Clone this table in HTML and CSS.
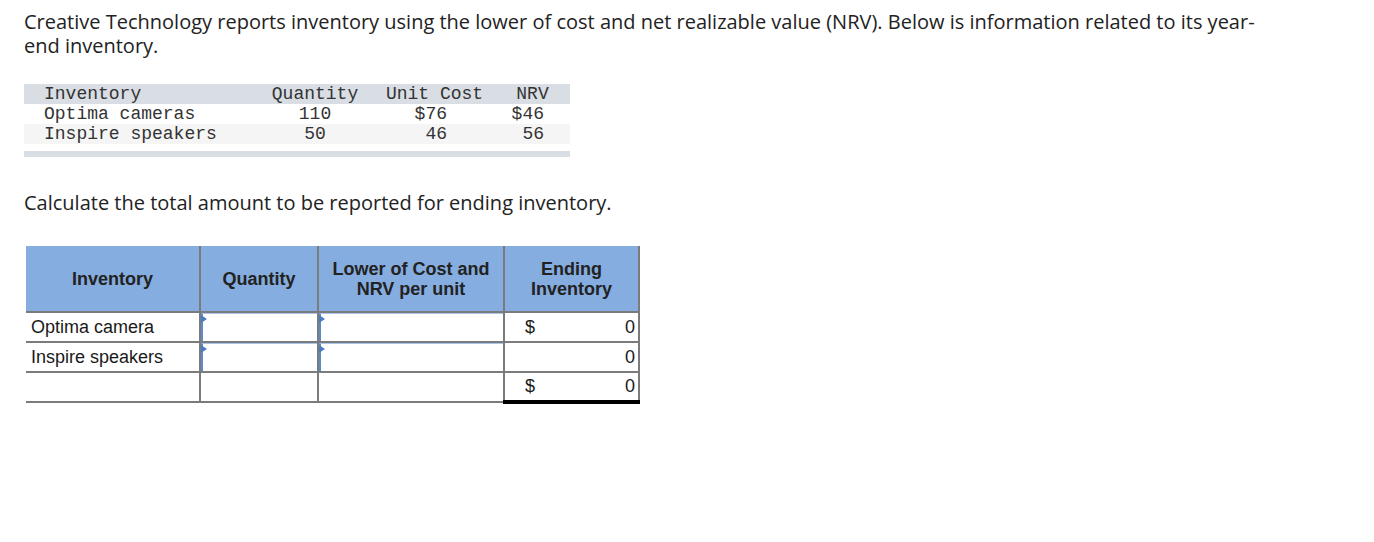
FILE: index.html
```html
<!DOCTYPE html>
<html>
<head>
<meta charset="utf-8">
<link rel="stylesheet" href="styles.css">
</head>
<body>
<div class="page">
  <p class="intro">Creative Technology reports inventory using the lower of cost and net realizable value (NRV). Below is information related to its year-end inventory.</p>

  <div class="given">
    <div class="grow ghead">
      <span class="c1">Inventory</span><span class="c2">Quantity</span><span class="c3h">Unit Cost</span><span class="c4h">NRV</span>
    </div>
    <div class="grow">
      <span class="c1">Optima cameras</span><span class="c2">110</span><span class="c3">$76</span><span class="c4">$46</span>
    </div>
    <div class="grow gshade">
      <span class="c1">Inspire speakers</span><span class="c2">50</span><span class="c3">46</span><span class="c4">56</span>
    </div>
    <div class="gbar"></div>
  </div>

  <p class="prompt">Calculate the total amount to be reported for ending inventory.</p>

  <table class="work">
    <colgroup>
      <col class="w1"><col class="w2"><col class="w3"><col class="w4">
    </colgroup>
    <thead>
      <tr>
        <th>Inventory</th>
        <th>Quantity</th>
        <th>Lower of Cost and<br>NRV per unit</th>
        <th>Ending<br>Inventory</th>
      </tr>
    </thead>
    <tbody>
      <tr>
        <td class="label">Optima camera</td>
        <td class="entry"><span class="box"><span class="flag"></span></span></td>
        <td class="entry"><span class="box"><span class="flag"></span></span></td>
        <td class="amt"><span class="cur">$</span><span class="val">0</span></td>
      </tr>
      <tr>
        <td class="label">Inspire speakers</td>
        <td class="entry"><span class="box"><span class="flag"></span></span></td>
        <td class="entry"><span class="box"><span class="flag"></span></span></td>
        <td class="amt"><span class="cur"></span><span class="val">0</span></td>
      </tr>
      <tr class="total">
        <td class="label"></td>
        <td></td>
        <td></td>
        <td class="amt"><span class="cur">$</span><span class="val">0</span></td>
      </tr>
    </tbody>
  </table>
</div>
</body>
</html>
```

FILE: styles.css
```css
* { box-sizing: border-box; }
body {
  margin: 0;
  background: #fff;
  color: #222;
  font-family: "Open Sans", "Lato", sans-serif;
}
.page {
  padding: 10px 24px 0 24px;
}
.intro {
  margin: 0;
  font-size: 20px;
  line-height: 24px;
  width: 1245px;
  color: #222;
}
.given {
  margin-top: 26px;
  width: 546px;
  font-family: "Liberation Mono", monospace;
  font-size: 18px;
  color: #333;
}
.grow {
  display: grid;
  grid-template-columns: 236px 110px 125px 75px;
  height: 20px;
  line-height: 20px;
  white-space: pre;
}
.ghead { background: #d9dde4; }
.gshade { background: #f5f5f5; }
.gbar {
  margin-top: 7px;
  height: 6px;
  background: #d9dde4;
}
.c1 { padding-left: 20px; }
.c2 { text-align: center; }
.c3h { text-align: center; padding-left: 4px; }
.c3 { text-align: right; padding-right: 48px; }
.c4h { text-align: center; }
.c4 { text-align: right; padding-right: 26px; }

.prompt {
  margin: 34px 0 0 0;
  font-size: 20px;
  line-height: 24px;
}

.work {
  margin: 31px 0 0 2px;
  border-collapse: collapse;
  table-layout: fixed;
  font-family: "Liberation Sans", Arial, sans-serif;
  font-size: 18px;
  color: #1a1a1a;
}
.w1 { width: 174px; }
.w2 { width: 118px; }
.w3 { width: 186px; }
.w4 { width: 135px; }
.work th {
  background: #85ade0;
  height: 66px;
  padding: 0;
  font-weight: bold;
  line-height: 20px;
  text-align: center;
  border-right: 2px solid #7b7b7b;
  border-bottom: 2px solid #7b7b7b;
  color: #222;
}
.work td {
  height: 30px;
  padding: 0;
  border-right: 2px solid #7b7b7b;
  border-bottom: 2px solid #7b7b7b;
  vertical-align: middle;
}
.work td.label { padding-left: 5px; }
.box {
  display: block;
  position: relative;
  height: 28px;
  border-top: 1px solid #a9c5ea;
  border-left: 2px solid #5b8bd0;
}
.flag {
  position: absolute;
  left: -2px;
  top: 1px;
  width: 0;
  height: 0;
  border-top: 4px solid transparent;
  border-bottom: 4px solid transparent;
  border-left: 6px solid #4a7cc4;
}
.amt .cur {
  display: inline-block;
  width: 90px;
  padding-left: 20px;
}
.amt .val {
  display: inline-block;
  width: 40px;
  text-align: right;
}
.total td.amt {
  border-top: 2px solid #000;
  border-bottom: 4px solid #000;
}
```
